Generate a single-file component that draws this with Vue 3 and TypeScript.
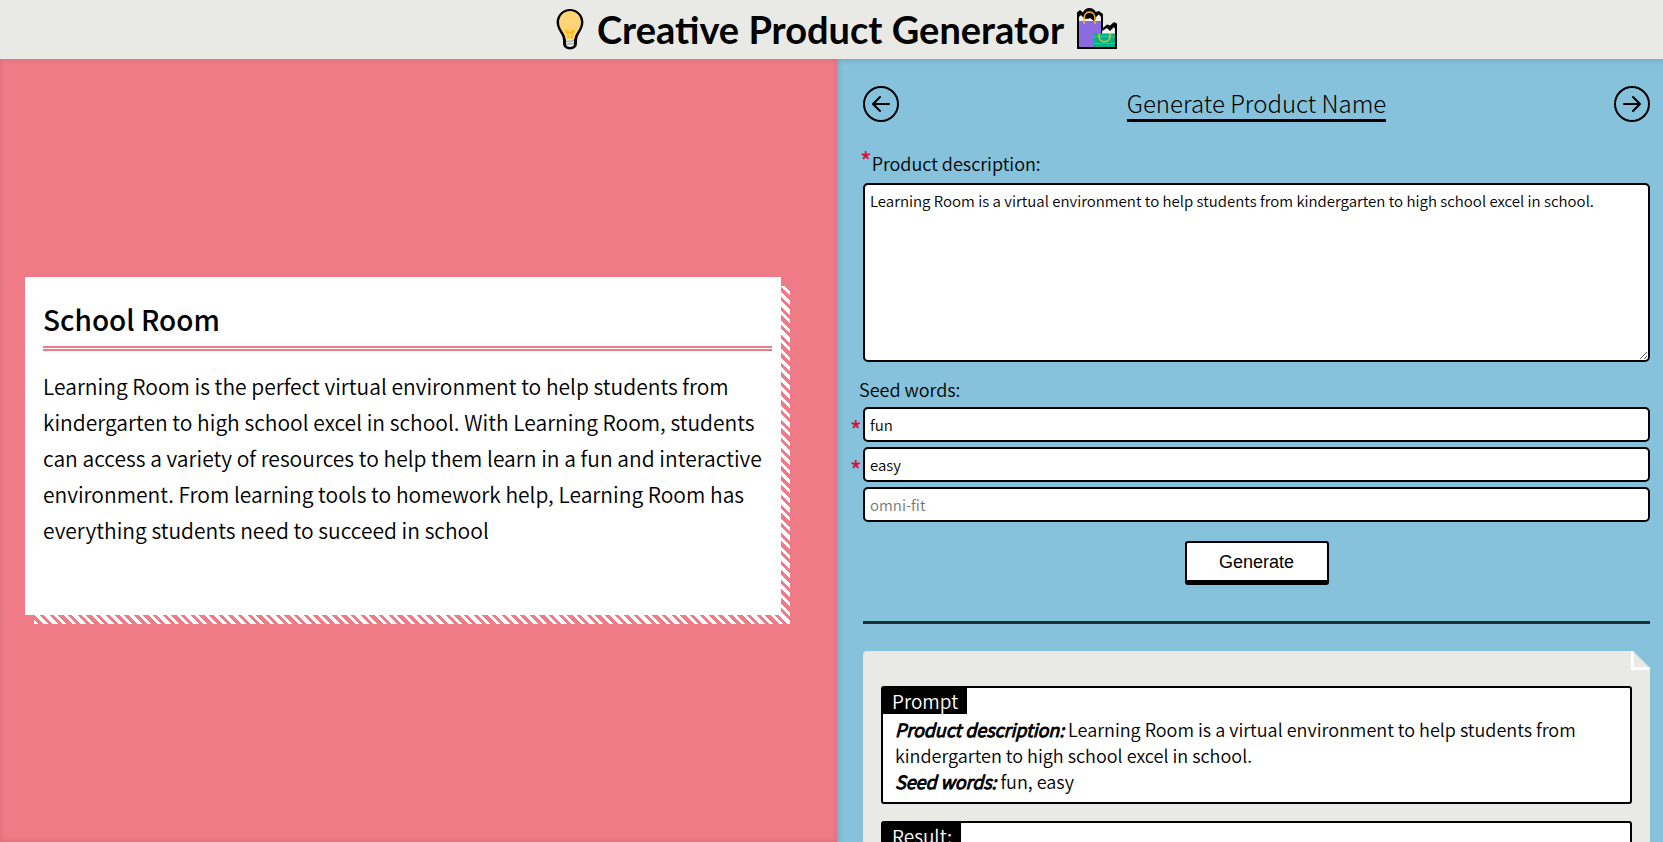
<script setup lang="ts">
import { ref } from 'vue'

const description = ref(
  'Learning Room is a virtual environment to help students from kindergarten to high school excel in school.',
)
const seeds = ref([
  { id: 'seed-1', value: 'fun', required: true, placeholder: '' },
  { id: 'seed-2', value: 'easy', required: true, placeholder: '' },
  { id: 'seed-3', value: '', required: false, placeholder: 'omni-fit' },
])
</script>

<template>
  <div class="page">
    <header class="top">
      <svg class="bulb" viewBox="0 0 30 44" aria-hidden="true">
        <path d="M15 3C8 3 2.600 8.500 2.600 15.300c0 4.700 2.100 7.800 4.200 11 1.500 2.300 2 4.500 2.200 7v3.200c0 2.900 2.300 5 6 5s6-2.100 6-5v-3.200c.2-2.500.7-4.700 2.200-7 2.100-3.200 4.200-6.300 4.200-11C27.400 8.500 22 3 15 3z" fill="#000" stroke="#000" stroke-width="2" />
        <path d="M15 4C8.600 4 4 9 4 15.300c0 4.300 2 7.200 4 10.300 1.500 2.300 2.300 4.400 2.500 6.400h9c.2-2 1-4.100 2.500-6.400 2-3.100 4-6 4-10.300C26 9 21.400 4 15 4z" fill="#ffd477" />
        <path d="M13.300 32l-.6-6.500c-2 .6-2.400-2.500-.5-2.300 1.300.2 1.200 1.900 1.200 2.600h3.200c0-.7-.1-2.400 1.200-2.600 1.900-.2 1.500 2.900-.5 2.300l-.6 6.500" fill="none" stroke="#fdb913" stroke-width="1.500" />
        <path d="M11 32h8v5c0 1.700-1.500 3-4 3s-4-1.300-4-3z" fill="#e4e6e8" />
        <path d="M11 34.500l8-.8M11 37.200l8-.8" stroke="#9a9da0" stroke-width="1" />
      </svg>
      <h1>Creative Product Generator</h1>
      <svg class="bags" viewBox="0 0 42 42" aria-hidden="true">
        <path d="M1 41V4.500L4 2l3 2.500C8 1.500 10.500 0 13.500 0c3.200 0 5.200 1.700 6.300 4L23 3l4 3v14l4-3.500 3 1 4-3.500 3 1.500V41z" fill="#000" />
        <path d="M3 13V9l2-2 2.500 3L10 8l1 3 4-1 3 2 3-4 2-1.500L25 9v4H3z" fill="#f0f0f0" />
        <path d="M8 10l5.500-7L20 11l-2 2-5-4-3 2z" fill="#000" />
        <path d="M3 13h22v26H3z" fill="#8a6ce0" />
        <path d="M26 26v-3l5-3 3 3 4-4 1 2v5z" fill="#f0f0f0" />
        <path d="M18 25.500h21V39H18z" fill="#00b389" />
        <path d="M18 28.500h21M18 35.500h21" stroke="#27c79f" stroke-width="1" />
        <path d="M8 16v-5c0-4 2-7 5.500-7S19 7 19 11v5M23 26v2.500c0 7 11 7 11 0V26" fill="none" stroke="#fdb913" stroke-width="1.500" />
      </svg>
    </header>

    <main class="panels">
      <section class="preview">
        <article class="card">
          <h2>School Room</h2>
          <p>
            Learning Room is the perfect virtual environment to help students from kindergarten to
            high school excel in school. With Learning Room, students can access a variety of
            resources to help them learn in a fun and interactive environment. From learning tools
            to homework help, Learning Room has everything students need to succeed in school
          </p>
        </article>
      </section>

      <section class="editor">
        <nav class="steps">
          <button class="arrow" type="button" aria-label="Previous step">
            <svg viewBox="0 0 36 36" aria-hidden="true">
              <circle cx="18" cy="18" r="17" />
              <path d="M26 18H10.500M17 11l-7 7 7 7" />
            </svg>
          </button>
          <h2>Generate Product Name</h2>
          <button class="arrow" type="button" aria-label="Next step">
            <svg viewBox="0 0 36 36" aria-hidden="true">
              <circle cx="18" cy="18" r="17" />
              <path d="M10 18h15.500M19 11l7 7-7 7" />
            </svg>
          </button>
        </nav>

        <form @submit.prevent>
          <label class="desc-label" for="description"><span class="star">*</span>Product description:</label>
          <textarea id="description" v-model="description"></textarea>

          <label class="seed-label" for="seed-1">Seed words:</label>
          <div v-for="seed in seeds" :key="seed.id" class="seed">
            <span v-if="seed.required" class="star">*</span>
            <input
              :id="seed.id"
              v-model="seed.value"
              type="text"
              aria-label="Seed word"
              :placeholder="seed.placeholder"
            />
          </div>
          <button class="generate" type="submit">Generate</button>
        </form>

        <hr />

        <div class="paper">
          <section class="note">
            <h3>Prompt</h3>
            <p><strong>Product description:</strong> {{ description }}</p>
            <p><strong>Seed words:</strong> fun, easy</p>
          </section>
          <section class="note">
            <h3>Result:</h3>
          </section>
        </div>
      </section>
    </main>
  </div>
</template>

<style>
body {
  margin: 0;
}
</style>

<style scoped>
*,
*::before,
*::after {
  box-sizing: border-box;
}
.page {
  display: flex;
  flex-direction: column;
  height: 100vh;
  overflow: hidden;
  color: #000;
  font-family: "Noto Sans CJK JP", "Noto Sans", sans-serif;
  font-size: 18px;
  font-weight: 350;
  line-height: 26px;
}
h1,
h2,
h3,
p {
  margin: 0;
  font-weight: inherit;
}
.top {
  display: flex;
  flex: none;
  align-items: center;
  justify-content: center;
  gap: 12px;
  height: 59px;
  padding: 0 0 2px 10px;
  background: #e9eae5;
}
.top h1 {
  font: 700 38px/48px Lato, sans-serif;
}
.bulb {
  width: 30px;
  height: 44px;
}
.bags {
  width: 42px;
  height: 42px;
}
.panels {
  display: grid;
  flex: 1;
  grid-template-columns: 837fr 826fr;
  min-height: 0;
}
.preview {
  display: flex;
  align-items: center;
  padding: 0 56px 9px 25px;
  background: #ef7b87;
  box-shadow: inset 0 0 6px rgba(0, 0, 0, 0.12);
}
.card {
  position: relative;
  width: 100%;
  min-height: 338px;
  padding: 19px 9px 18px 18px;
  background: #fff;
}
.card::after {
  position: absolute;
  inset: 9px -9px -9px 9px;
  background: repeating-linear-gradient(
    45deg,
    #fff 0 3px,
    #ef7b87 3px 7px,
    #fff 7px 10px,
    #ef7b87 10px 13px,
    #fff 13px 17px,
    #ef7b87 17px 20px
  );
  clip-path: polygon(calc(100% - 9px) 0, 100% 0, 100% 100%, 0 100%, 0 calc(100% - 9px), calc(100% - 9px) calc(100% - 9px));
  content: "";
}
.card h2 {
  padding-bottom: 4px;
  border-bottom: 5px double #ef7b87;
  font-size: 28px;
  font-weight: 500;
  line-height: 46px;
}
.card p {
  margin-top: 17px;
  font-size: 21px;
  line-height: 36px;
}
.editor {
  padding: 27px 13px 0 26px;
  overflow: auto;
  background: #86c2dc;
  box-shadow: inset 4px 4px 6px -3px rgba(0, 0, 0, 0.15);
  scrollbar-width: none;
}
.steps {
  display: flex;
  align-items: center;
  justify-content: space-between;
}
.steps h2 {
  border-bottom: 3px solid #000;
  font-size: 24px;
  font-weight: 300;
  line-height: 32px;
}
.arrow {
  width: 36px;
  height: 36px;
  padding: 0;
  border: 0;
  background: none;
}
.arrow svg {
  display: block;
  fill: none;
  stroke: #000;
  stroke-linecap: round;
  stroke-linejoin: round;
  stroke-width: 2;
}
form {
  display: flex;
  flex-direction: column;
  margin-top: 28px;
}
.desc-label {
  display: flex;
  margin-left: -3px;
}
.star {
  color: #d2143a;
  font-size: 24px;
  font-weight: 500;
  line-height: 20px;
}
textarea,
input {
  width: 100%;
  border: 2px solid #000;
  border-radius: 5px;
  background: #fff;
  color: #000;
  font: 350 15px/24px "Noto Sans CJK JP", sans-serif;
}
textarea {
  height: 179px;
  margin-top: 7px;
  padding: 4px 5px;
}
.seed-label {
  margin: 14px 0 5px -4px;
}
.seed {
  position: relative;
  margin-bottom: 5px;
}
.seed .star {
  position: absolute;
  top: 12px;
  left: -13px;
}
input {
  display: block;
  height: 35px;
  padding: 0 5px;
}
input::placeholder {
  color: #757575;
}
.generate {
  align-self: center;
  width: 144px;
  height: 44px;
  margin-top: 14px;
  border: 2px solid #000;
  border-bottom-width: 5px;
  border-radius: 3px;
  background: #fff;
  color: #000;
  font: 18px/20px "Liberation Sans", Arial, sans-serif;
}
hr {
  height: 3px;
  margin: 36px 0 27px;
  border: 0;
  background: #1f2f37;
}
.paper {
  position: relative;
  display: flex;
  flex-direction: column;
  gap: 17px;
  padding: 35px 18px;
  border-radius: 4px 0 0 0;
  background: #e9eae5;
  clip-path: polygon(0 0, calc(100% - 17px) 0, 100% 17px, 100% 100%, 0 100%);
}
.paper::before {
  position: absolute;
  top: 0;
  right: 0;
  width: 19px;
  height: 19px;
  border-bottom: 3px solid #fff;
  border-left: 3px solid #fff;
  content: "";
}
.note {
  padding-bottom: 8px;
  border: 2px solid #000;
  border-radius: 3px;
  background: #fff;
}
.note h3 {
  width: fit-content;
  padding: 0 9px;
  background: #000;
  color: #fff;
  font-size: 19px;
  line-height: 26px;
}
.note p {
  padding: 0 12px;
}
.note h3 + p {
  margin-top: 2px;
}
.note strong {
  font-style: italic;
  font-weight: inherit;
  -webkit-text-stroke: 1px #000;
}
</style>
